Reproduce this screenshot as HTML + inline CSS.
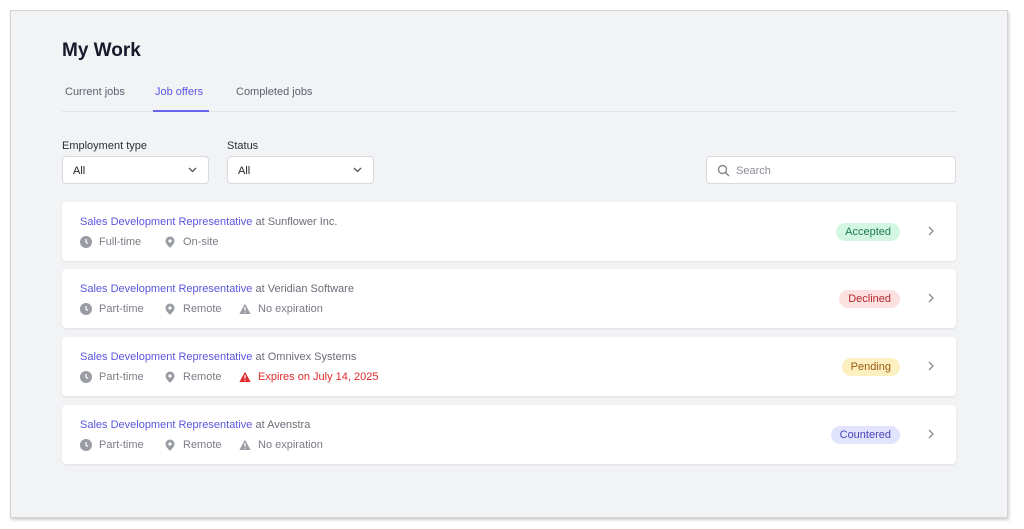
<!DOCTYPE html>
<html><head><style>
*{box-sizing:border-box;margin:0;padding:0}
body{width:1024px;height:529px;background:#fff;font-family:"Liberation Sans",sans-serif;position:relative;overflow:hidden}
.panel{position:absolute;left:10px;top:10px;width:998px;height:508px;background:#f2f3f5;border:1px solid #d4d4d6;box-shadow:1px 2px 3px rgba(0,0,0,.2)}
.a{position:absolute}
h1{position:absolute;left:62px;top:40px;font-size:19px;font-weight:bold;color:#151a2b}
.tab{position:absolute;top:86px;font-size:11px;color:#5d6170}
.sel{position:absolute;top:156px;height:28px;background:#fff;border:1px solid #d8dae0;border-radius:4px;font-size:11px;color:#222;padding:8px 10px}
.lbl{position:absolute;top:140px;font-size:11px;color:#2b2f3a}
.card{position:absolute;left:62px;width:894px;height:59px;background:#fff;border-radius:4px;box-shadow:0 1px 2px rgba(0,0,0,.08)}
.t{position:absolute;left:18px;top:14px;font-size:11px;color:#6b6e78}
.t b{font-weight:normal;color:#5b55e0}
.m{position:absolute;left:18px;top:34px;font-size:11px;color:#7a7d86;display:flex;align-items:center}
.m span{display:flex;align-items:center}
.m span:nth-child(1){width:84px}
.m span:nth-child(2){width:75px}
.m svg{margin-right:7px}
.badge{position:absolute;right:56px;top:21px;height:18px;border-radius:9px;font-size:11px;padding:3px 9px}
.chev{position:absolute;right:22px;top:24px}
</style></head><body>
<div class="panel"></div>
<h1>My Work</h1>
<div class="tab" style="left:65px">Current jobs</div>
<div class="tab" style="left:155px;color:#5b55e0">Job offers</div>
<div class="tab" style="left:236px">Completed jobs</div>
<div class="a" style="left:62px;top:111px;width:894px;height:1px;background:#e2e3e7"></div>
<div class="a" style="left:153px;top:110px;width:56px;height:2px;background:#6b66ee"></div>
<div class="lbl" style="left:62px">Employment type</div>
<div class="lbl" style="left:227px">Status</div>
<div class="sel" style="left:62px;width:147px">All<svg class="a" style="right:11px;top:10px" width="9" height="6"><path d="M1 1l3.5 3.5L8 1" stroke="#555" stroke-width="1.3" fill="none"/></svg></div>
<div class="sel" style="left:227px;width:147px">All<svg class="a" style="right:11px;top:10px" width="9" height="6"><path d="M1 1l3.5 3.5L8 1" stroke="#555" stroke-width="1.3" fill="none"/></svg></div>
<div class="sel" style="left:706px;width:250px;color:#8a8d96;padding-left:29px">Search<svg class="a" style="left:10px;top:7px" width="13" height="13"><circle cx="5.5" cy="5.5" r="4" stroke="#888" stroke-width="1.4" fill="none"/><path d="M8.5 8.5l3.5 3.5" stroke="#888" stroke-width="1.4"/></svg></div>

<svg width="0" height="0" style="position:absolute"><defs>
<symbol id="clk" viewBox="0 0 12 12"><circle cx="6" cy="6" r="6" fill="#9a9ca4"/><path d="M6 3v3.2l2 1.3" stroke="#fff" stroke-width="1.3" fill="none"/></symbol>
<symbol id="pin" viewBox="0 0 12 12"><path d="M6 0.5a4.5 4.5 0 0 0-4.5 4.5c0 3 4.5 6.8 4.5 6.8s4.5-3.8 4.5-6.8A4.5 4.5 0 0 0 6 .5z" fill="#9a9ca4"/><circle cx="6" cy="5" r="1.6" fill="#fff"/></symbol>
<symbol id="wrn" viewBox="0 0 12 12"><path d="M6 .8L11.6 11H.4z" fill="currentColor"/><path d="M6 4v3.5M6 8.8v1" stroke="#fff" stroke-width="1.3"/></symbol>
<symbol id="chv" viewBox="0 0 6 10"><path d="M1 1l4 4-4 4" stroke="#8a8d96" stroke-width="1.3" fill="none"/></symbol>
</defs></svg>

<div class="card" style="top:202px"><div class="t"><b>Sales Development Representative</b> at Sunflower Inc.</div>
<div class="m"><span><svg width="12" height="12"><use href="#clk"/></svg>Full-time</span><span><svg width="12" height="12"><use href="#pin"/></svg>On-site</span></div>
<div class="badge" style="background:#d3f6e3;color:#1e7a4c">Accepted</div><svg class="chev" width="6" height="10"><use href="#chv"/></svg></div>

<div class="card" style="top:269px"><div class="t"><b>Sales Development Representative</b> at Veridian Software</div>
<div class="m"><span><svg width="12" height="12"><use href="#clk"/></svg>Part-time</span><span><svg width="12" height="12"><use href="#pin"/></svg>Remote</span><span style="color:#7a7d86"><svg width="12" height="12" style="color:#9a9ca4"><use href="#wrn"/></svg>No expiration</span></div>
<div class="badge" style="background:#fde0e0;color:#b4282e">Declined</div><svg class="chev" width="6" height="10"><use href="#chv"/></svg></div>

<div class="card" style="top:337px"><div class="t"><b>Sales Development Representative</b> at Omnivex Systems</div>
<div class="m"><span><svg width="12" height="12"><use href="#clk"/></svg>Part-time</span><span><svg width="12" height="12"><use href="#pin"/></svg>Remote</span><span style="color:#e02a2a"><svg width="12" height="12" style="color:#e02a2a"><use href="#wrn"/></svg>Expires on July 14, 2025</span></div>
<div class="badge" style="background:#fdf0c0;color:#9a5a12">Pending</div><svg class="chev" width="6" height="10"><use href="#chv"/></svg></div>

<div class="card" style="top:405px"><div class="t"><b>Sales Development Representative</b> at Avenstra</div>
<div class="m"><span><svg width="12" height="12"><use href="#clk"/></svg>Part-time</span><span><svg width="12" height="12"><use href="#pin"/></svg>Remote</span><span style="color:#7a7d86"><svg width="12" height="12" style="color:#9a9ca4"><use href="#wrn"/></svg>No expiration</span></div>
<div class="badge" style="background:#e2e4fd;color:#4a45b8">Countered</div><svg class="chev" width="6" height="10"><use href="#chv"/></svg></div>
</body></html>
